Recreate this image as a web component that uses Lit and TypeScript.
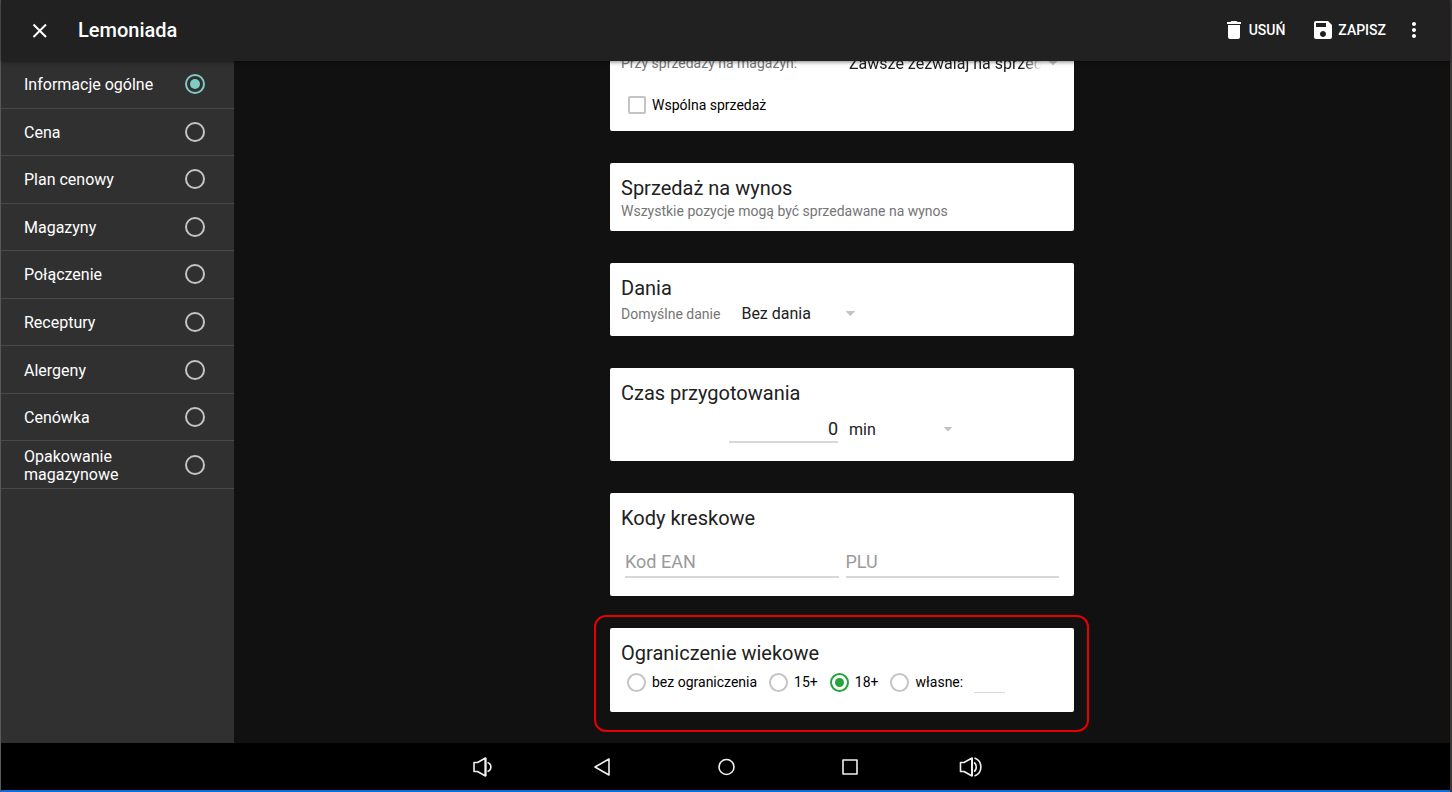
import { LitElement, html, css, svg } from "lit";
import { customElement, state } from "lit/decorators.js";

const SECTIONS = [
  "Informacje ogólne",
  "Cena",
  "Plan cenowy",
  "Magazyny",
  "Połączenie",
  "Receptury",
  "Alergeny",
  "Cenówka",
  "Opakowanie magazynowe",
];

const AGE_LIMITS = ["bez ograniczenia", "15+", "18+", "własne:"];

const strokeIcon = (body: unknown) => html`
  <svg class="icon" viewBox="0 0 24 24" fill="none" stroke="currentColor" stroke-width="1.6" stroke-linejoin="round" aria-hidden="true">${body}</svg>
`;
const fillIcon = (d: string) => html`
  <svg class="icon" viewBox="0 0 24 24" fill="currentColor" aria-hidden="true"><path d=${d}></path></svg>
`;

@customElement("app-root")
export class AppRoot extends LitElement {
  @state() private section = 0;
  @state() private age = 2;

  static styles = css`
    :host {
      display: flex;
      flex-direction: column;
      height: 100vh;
      box-sizing: border-box;
      border-left: 1px solid #595959;
      border-right: 2px solid #3c3a39;
      background: #111;
      color: #fff;
      font-family: Roboto, "Noto Sans", sans-serif;
      font-size: 14px;
    }
    * {
      box-sizing: border-box;
    }
    button {
      display: flex;
      align-items: center;
      padding: 0;
      border: 0;
      background: none;
      color: inherit;
      font: inherit;
    }
    .icon {
      display: block;
      flex: none;
      width: 24px;
      height: 24px;
    }

    .bar {
      display: flex;
      align-items: center;
      flex: none;
      height: 61px;
      padding: 0 24px 1px 27px;
      background: #212121;
      box-shadow: 0 1px 4px rgba(0, 0, 0, 0.5);
      position: relative;
      z-index: 1;
    }
    .bar h1 {
      flex: 1;
      margin: 0 0 0 26px;
      font-size: 20px;
      font-weight: 500;
    }
    .actions {
      display: flex;
      align-items: center;
      font-weight: 500;
    }
    .action {
      gap: 3px;
      margin-right: 26px;
    }
    .save {
      margin-right: 16px;
    }

    .body {
      display: flex;
      flex: 1;
      min-height: 0;
    }
    .side {
      flex: none;
      width: 233px;
      background: #303030;
    }
    .sections {
      display: grid;
      grid-auto-rows: 1fr;
      height: 428px;
      margin: 0;
      padding: 0;
      list-style: none;
    }
    .sections li {
      border-bottom: 1px solid #484848;
    }
    .section {
      display: flex;
      align-items: center;
      justify-content: space-between;
      height: 100%;
      padding: 0 29px 0 23px;
      font-size: 16px;
      line-height: 18px;
    }
    .section span {
      max-width: 130px;
      padding-top: 2px;
    }

    .radio {
      appearance: none;
      display: grid;
      place-items: center;
      flex: none;
      width: 20px;
      height: 20px;
      margin: 0;
      border: 2px solid #c4c4c4;
      border-radius: 50%;
    }
    .radio:checked {
      border-color: #80cbc4;
    }
    .radio:checked::before {
      content: "";
      width: 10px;
      height: 10px;
      border-radius: 50%;
      background: #80cbc4;
    }

    .content {
      display: flex;
      flex: 1;
      flex-direction: column;
      align-items: center;
      justify-content: flex-end;
      gap: 32px;
      min-width: 0;
      padding-bottom: 31px;
      overflow: hidden;
    }
    .card {
      flex: none;
      width: 464px;
      max-width: 100%;
      padding: 13px 11px 9px;
      border-radius: 2px;
      background: #fff;
      color: #212121;
    }
    .card.partial {
      padding-bottom: 12px;
    }
    .card.tall {
      padding-bottom: 18px;
    }
    .card h2 {
      margin: 0;
      font-size: 20px;
      font-weight: 400;
      line-height: 24px;
    }
    .muted {
      margin: 0;
      color: #757575;
      line-height: 22px;
    }
    .row {
      display: flex;
      align-items: center;
    }
    .stock {
      justify-content: space-between;
      height: 28px;
    }
    .share {
      gap: 6px;
      height: 28px;
      margin-top: 14px;
      padding-left: 7px;
      color: #000;
    }
    .check {
      appearance: none;
      width: 18px;
      height: 18px;
      margin: 0;
      border: 2px solid #c4c4c4;
      border-radius: 2px;
    }
    .course {
      gap: 21px;
      height: 27px;
    }
    .time {
      justify-content: center;
      gap: 11px;
      margin-top: 10px;
    }
    .codes {
      gap: 7px;
      margin-top: 16px;
      padding: 0 4px;
    }
    .ages {
      height: 34px;
      margin-bottom: 4px;
      padding-left: 6px;
      color: #000;
    }
    .age {
      display: flex;
      align-items: center;
      gap: 6px;
      margin-right: 12px;
    }
    .age:last-of-type {
      margin-right: 11px;
    }
    .ages .radio:checked {
      border-color: #26a33c;
    }
    .ages .radio:checked::before {
      background: #26a33c;
    }
    .ages .radio {
      width: 19px;
      height: 19px;
    }
    .ages .radio:checked::before {
      width: 9px;
      height: 9px;
    }

    .picker {
      display: grid;
      align-items: center;
      width: 116px;
    }
    .picker > * {
      grid-area: 1 / 1;
    }
    .picker.unit {
      width: 106px;
    }
    .picker.wide {
      width: 214px;
    }
    .picker select {
      appearance: none;
      width: 100%;
      height: 24px;
      padding: 0;
      border: 0;
      background: none;
      color: #212121;
      font: inherit;
      font-size: 16px;
    }
    .picker.wide select {
      width: 192px;
      mask-image: linear-gradient(to right, #000 174px, transparent 192px);
    }
    .arrow {
      justify-self: end;
      width: 10px;
      height: 5px;
      margin-right: 2px;
      background: #c4c4c4;
      clip-path: polygon(0 0, 100% 0, 50% 100%);
      pointer-events: none;
    }
    .wide .arrow {
      margin-right: 5px;
    }

    .field {
      min-width: 0;
      height: 28px;
      padding: 0;
      border: 0;
      border-bottom: 2px solid #d8d8d8;
      border-radius: 0;
      background: none;
      color: #212121;
      font: inherit;
      font-size: 18px;
    }
    .field::placeholder {
      color: #9a9a9a;
      opacity: 1;
    }
    .minutes {
      width: 109px;
      text-align: right;
    }
    .code {
      flex: 1;
      height: 32px;
    }
    .custom {
      width: 31px;
      height: 22px;
      border-bottom-width: 1px;
    }

    .marked {
      position: relative;
    }
    .marked::after {
      content: "";
      position: absolute;
      inset: -13px -15px -20px -16px;
      border: 2px solid #e80000;
      border-radius: 12px;
      pointer-events: none;
    }

    .system {
      display: flex;
      align-items: center;
      justify-content: center;
      gap: 96px;
      flex: none;
      height: 49px;
      border-bottom: 2px solid #0a6fdc;
      background: #000;
      color: #f0f0f0;
    }
    .keys {
      display: flex;
      gap: 100px;
    }
  `;

  render() {
    return html`
      <header class="bar">
        <button aria-label="Zamknij">
          <svg class="icon" viewBox="0 0 24 24" fill="none" stroke="currentColor" stroke-width="2" aria-hidden="true">
            <path d="M5.500 6.500L18 19M18 6.500L5.500 19"></path>
          </svg>
        </button>
        <h1>Lemoniada</h1>
        <div class="actions">
          <button class="action">
            ${fillIcon("M6 19c0 1.100.9 2 2 2h8c1.100 0 2-.9 2-2V7H6v12zM19 4h-3.500l-1-1h-5l-1 1H5v2h14V4z")}USUŃ
          </button>
          <button class="action save">
            ${fillIcon("M17 3H5c-1.110 0-2 .9-2 2v14c0 1.100.890 2 2 2h14c1.100 0 2-.9 2-2V7l-4-4zm-5 16c-1.660 0-3-1.340-3-3s1.340-3 3-3 3 1.340 3 3-1.340 3-3 3zm3-10H5V5h10v4z")}ZAPISZ
          </button>
          <button aria-label="Więcej">
            ${fillIcon("M12 8c1.100 0 2-.9 2-2s-.9-2-2-2-2 .9-2 2 .9 2 2 2zm0 2c-1.100 0-2 .9-2 2s.9 2 2 2 2-.9 2-2-.9-2-2-2zm0 6c-1.100 0-2 .9-2 2s.9 2 2 2 2-.9 2-2-.9-2-2-2z")}
          </button>
        </div>
      </header>

      <div class="body">
        <nav class="side">
          <ul class="sections">
            ${SECTIONS.map(
              (name, i) => html`<li>
                <label class="section">
                  <span>${name}</span>
                  <input class="radio" type="radio" name="section" .checked=${i === this.section} @change=${() => (this.section = i)} />
                </label>
              </li>`
            )}
          </ul>
        </nav>

        <main class="content">
          <section class="card partial">
            <div class="row stock">
              <label class="muted" for="stock">Przy sprzedaży na magazyn:</label>
              <div class="picker wide">
                <select id="stock"><option>Zawsze zezwalaj na sprzedaż</option></select>
                <span class="arrow"></span>
              </div>
            </div>
            <label class="row share"><input class="check" type="checkbox" />Wspólna sprzedaż</label>
          </section>

          <section class="card">
            <h2>Sprzedaż na wynos</h2>
            <p class="muted">Wszystkie pozycje mogą być sprzedawane na wynos</p>
          </section>

          <section class="card">
            <h2>Dania</h2>
            <div class="row course">
              <label class="muted" for="course">Domyślne danie</label>
              <div class="picker">
                <select id="course"><option>Bez dania</option></select>
                <span class="arrow"></span>
              </div>
            </div>
          </section>

          <section class="card tall">
            <h2 id="time">Czas przygotowania</h2>
            <div class="row time">
              <input class="field minutes" type="text" value="0" aria-labelledby="time" />
              <div class="picker unit">
                <select aria-label="Jednostka"><option>min</option></select>
                <span class="arrow"></span>
              </div>
            </div>
          </section>

          <section class="card tall">
            <h2>Kody kreskowe</h2>
            <div class="row codes">
              <input class="field code" type="text" placeholder="Kod EAN" aria-label="Kod EAN" />
              <input class="field code" type="text" placeholder="PLU" aria-label="PLU" />
            </div>
          </section>

          <section class="card marked">
            <h2>Ograniczenie wiekowe</h2>
            <div class="row ages">
              ${AGE_LIMITS.map(
                (name, i) => html`<label class="age">
                  <input class="radio" type="radio" name="age" .checked=${i === this.age} @change=${() => (this.age = i)} />${name}
                </label>`
              )}
              <input class="field custom" type="text" aria-label="Własne ograniczenie" />
            </div>
          </section>
        </main>
      </div>

      <footer class="system">
        <button aria-label="Ciszej">
          ${strokeIcon(svg`<path d="M4 7.500h3.500L15.500 3v18l-8-4.500H4z"></path><path d="M15.500 3v18" stroke-width="2"></path><path d="M17.500 7.500c4.500 1.500 4.500 7.500 0 9"></path>`)}
        </button>
        <div class="keys">
          <button aria-label="Wstecz">${strokeIcon(svg`<path d="M19 4v16L5 12z"></path>`)}</button>
          <button aria-label="Start">${strokeIcon(svg`<circle cx="12.500" cy="12" r="7.500"></circle>`)}</button>
          <button aria-label="Ostatnie">${strokeIcon(svg`<path d="M5 5h14v14H5z"></path>`)}</button>
        </div>
        <button aria-label="Głośniej">
          ${strokeIcon(svg`<path d="M2.500 7.500H6L14 3v18l-8-4.500H2.500z"></path><path d="M14 3v18" stroke-width="2"></path><path d="M16 7.500c3 1.500 3 7.500 0 9M16.500 3c8.500 3 8.500 15 0 18"></path>`)}
        </button>
      </footer>
    `;
  }
}
